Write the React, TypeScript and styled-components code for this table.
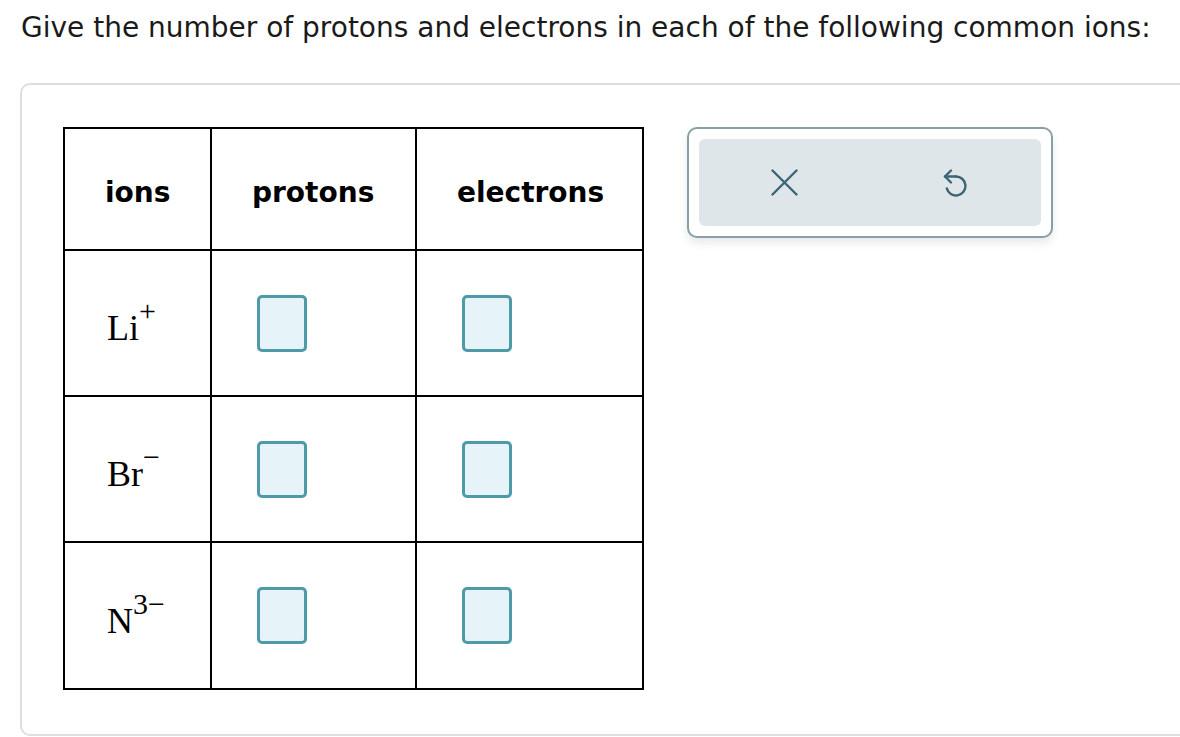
import React from "react";
import styled, { createGlobalStyle } from "styled-components";

const Global = createGlobalStyle`
  html, body { margin: 0; padding: 0; background: #ffffff; overflow: hidden; }
  body { font-family: "DejaVu Sans", Verdana, sans-serif; color: #000; }
`;

const Page = styled.div`
  width: 1180px;
  height: 737px;
  overflow: hidden;
`;

const Prompt = styled.p`
  margin: 0;
  padding: 12px 0 0 21px;
  font-size: 28px;
  line-height: 32px;
  color: #1a1a1a;
  white-space: nowrap;
`;

const Card = styled.div`
  margin: 39px 0 0 20px;
  width: 1200px;
  height: 653px;
  box-sizing: border-box;
  border: 2px solid #dcdfdf;
  border-radius: 10px;
  padding: 42px 0 0 41px;
  display: flex;
  align-items: flex-start;
  gap: 43px;
`;

const Table = styled.table`
  border-collapse: collapse;
  border: 2px solid #000;
  table-layout: fixed;
`;

const HeadCell = styled.th<{ $w: number }>`
  width: ${(p) => p.$w}px;
  height: 122px;
  box-sizing: border-box;
  border: 2px solid #000;
  padding: 6px 0 0 40px;
  text-align: left;
  vertical-align: middle;
  font-family: "DejaVu Sans", Verdana, sans-serif;
  font-weight: bold;
  font-size: 28px;
`;

const Cell = styled.td<{ $h: number }>`
  height: ${(p) => p.$h}px;
  box-sizing: border-box;
  border: 2px solid #000;
  padding: 0 0 0 42px;
  vertical-align: middle;
`;

const Ion = styled.span`
  font-family: "Liberation Serif", "Times New Roman", serif;
  font-size: 36px;
  line-height: 1;
  display: inline-block;
  padding-top: 10px;
`;

const Sup = styled.sup`
  font-size: 30px;
  line-height: 0;
  position: relative;
  top: -6px;
  margin-left: 0;
`;

const AnswerBox = styled.div`
  margin-left: 3px;
  width: 50px;
  height: 57px;
  box-sizing: border-box;
  border: 3px solid #4f9aa8;
  border-radius: 5px;
  background: #e6f3f8;
`;

const ToolFrame = styled.div`
  width: 366px;
  height: 111px;
  box-sizing: border-box;
  border: 2px solid #8a9ea6;
  border-radius: 10px;
  padding: 10px;
  background: #fff;
  box-shadow: 0 5px 8px rgba(60, 80, 90, 0.12);
`;

const ToolBar = styled.div`
  height: 100%;
  border-radius: 6px;
  background: #dfe6e9;
  display: grid;
  grid-template-columns: 1fr 1fr;
  align-items: center;
  justify-items: center;
`;

const IconButton = styled.button`
  border: none;
  background: transparent;
  padding: 0;
  display: flex;
  align-items: center;
  justify-content: center;
  color: #3b6575;
  cursor: pointer;
`;

const XIcon = () => (
  <svg width="27" height="27" viewBox="0 0 27 27" fill="none" stroke="currentColor" strokeWidth="2.4" strokeLinecap="round">
    <path d="M1.5 1.5 L25.5 25.5 M25.5 1.5 L1.5 25.5" />
  </svg>
);

const UndoIcon = () => (
  <svg width="26" height="30" viewBox="0 0 26 30" fill="none" stroke="currentColor" strokeWidth="2.4" strokeLinecap="round" strokeLinejoin="round">
    <path d="M13 8.5 A9.5 9.5 0 1 1 3.8 20.4" />
    <path d="M2 8.5 H13" />
    <path d="M8 2.5 L2 8.5 L8 14.5" />
  </svg>
);

const rows = [
  { base: "Li", charge: "+", h: 146 },
  { base: "Br", charge: "\u2212", h: 146 },
  { base: "N", charge: "3\u2212", h: 147 },
];

export default function App() {
  return (
    <Page>
      <Global />
      <Prompt>Give the number of protons and electrons in each of the following common ions:</Prompt>
      <Card>
        <Table>
          <thead>
            <tr>
              <HeadCell $w={147}>ions</HeadCell>
              <HeadCell $w={205}>protons</HeadCell>
              <HeadCell $w={227}>electrons</HeadCell>
            </tr>
          </thead>
          <tbody>
            {rows.map((r) => (
              <tr key={r.base}>
                <Cell $h={r.h}>
                  <Ion>
                    {r.base}
                    <Sup>{r.charge}</Sup>
                  </Ion>
                </Cell>
                <Cell $h={r.h}>
                  <AnswerBox />
                </Cell>
                <Cell $h={r.h}>
                  <AnswerBox />
                </Cell>
              </tr>
            ))}
          </tbody>
        </Table>
        <ToolFrame>
          <ToolBar>
            <IconButton aria-label="clear">
              <XIcon />
            </IconButton>
            <IconButton aria-label="undo">
              <UndoIcon />
            </IconButton>
          </ToolBar>
        </ToolFrame>
      </Card>
    </Page>
  );
}
